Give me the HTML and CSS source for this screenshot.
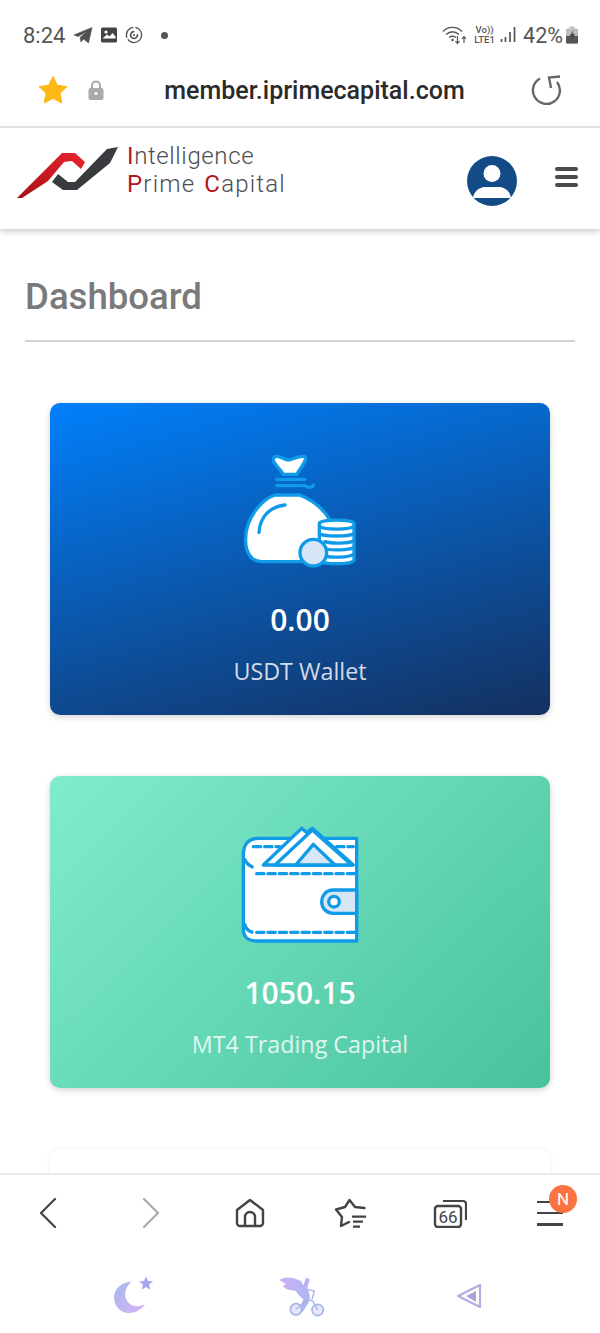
FILE: index.html
```html
<!DOCTYPE html>
<html lang="en">
<head>
<meta charset="utf-8">
<title>Dashboard</title>
<link rel="stylesheet" href="styles.css">
</head>
<body>
<div class="phone">
  <div class="status">
    <div class="status-left">
      <span class="time">8:24</span>
      <svg class="st-ic" width="20" height="18" viewBox="0 0 20 18"><path d="M1 9 19 1.500 15.500 17 10.500 13 8 16 7 11.500 14 5.500 5 10.500Z" fill="#4f4f4f" stroke="#4f4f4f" stroke-width=".6" stroke-linejoin="round"/></svg>
      <svg class="st-ic" width="18" height="18" viewBox="0 0 18 18"><rect x="1" y="1.500" width="16" height="15" rx="1.500" fill="#444"/><circle cx="6" cy="6" r="1.600" fill="#fff"/><path d="M2.500 12.500 7 8.500l2.500 2 3-3.500 3 3.500v2Z" fill="#fff"/></svg>
      <svg class="st-ic" width="18" height="18" viewBox="0 0 18 18"><circle cx="9" cy="9" r="7.600" fill="none" stroke="#555" stroke-width="1.400" stroke-dasharray="19 2 14 2"/><circle cx="9" cy="9" r="3.400" fill="none" stroke="#555" stroke-width="1.700" stroke-dasharray="16 4"/><circle cx="9" cy="9" r="1" fill="#555"/></svg>
      <span class="dot"></span>
    </div>
    <div class="status-right">
      <svg class="wifi" width="26" height="20" viewBox="0 0 26 20"><g fill="none" stroke="#555" stroke-width="1.400"><path d="M1 6.500C6 1 15 1 20 6.500"/><path d="M4 9.500C8 6 13 6 17 9.500"/><path d="M7 12.500C9 11 12 11 14 12.500"/></g><circle cx="10.500" cy="15" r="1.300" fill="#555"/><path d="M15.500 11v7M13.500 16l2 2.500 2-2.500M22 18v-6M20 14l2-2.500 2 2.500" stroke="#555" stroke-width="1.200" fill="none"/></svg>
      <span class="volte"><span>Vo))</span><span>LTE1</span></span>
      <svg class="signal" width="16" height="18" viewBox="0 0 16 18"><path d="M1.500 13v3M5.500 11v5M10 6v10M14.500 1v15" stroke="#555" stroke-width="1.700"/></svg>
      <span class="pct">42%</span>
      <svg class="batt" width="12" height="18" viewBox="0 0 12 18"><rect x="0" y="2.500" width="12" height="15" rx="1.500" fill="#bbb"/><rect x="3.500" y="0.500" width="5" height="2" fill="#bbb"/><rect x="0" y="10" width="12" height="7.500" rx="1" fill="#555"/><path d="M7.500 4 3.500 10.500H6l-1 4 4-6.500H6.500Z" fill="#444"/></svg>
    </div>
  </div>

  <div class="urlbar">
    <svg class="star" width="32" height="30" viewBox="0 0 32 30"><path d="M16 1.500 20.300 10.300 30 11.600 23 18.300 24.800 28 16 23.300 7.200 28 9 18.300 2 11.600 11.700 10.300Z" fill="#fdb813" stroke="#fdb813" stroke-linejoin="round"/></svg>
    <svg class="lock" width="18" height="22" viewBox="0 0 18 22"><path d="M5 10V6.500a4 4 0 0 1 8 0V10" fill="none" stroke="#aaa" stroke-width="2"/><rect x="1.500" y="9" width="15" height="12" rx="2" fill="#aaa"/><circle cx="9" cy="14.500" r="1.500" fill="#fff"/></svg>
    <span class="url">member.iprimecapital.com</span>
    <svg class="reload" width="32" height="32" viewBox="0 0 32 32"><path d="M10 4.500A13.500 13.500 0 1 0 27 8" fill="none" stroke="#666" stroke-width="2.400"/><path d="M30 2.500 19 3.500 21 14" fill="none" stroke="#666" stroke-width="2.400"/></svg>
  </div>

  <header class="site-head">
    <div class="logo">
      <svg class="logo-mark" width="104" height="54" viewBox="0 0 104 54">
        <defs><linearGradient id="lr" x1="0" y1="1" x2="1" y2="0"><stop offset="0" stop-color="#a80f18"/><stop offset="1" stop-color="#e8242c"/></linearGradient></defs>
        <path d="M1 53 46 8 59 8 69 17 65 24 56 16 48 17 32 36 6 53Z" fill="url(#lr)"/>
        <path d="M102 2 91 4 59 37 52 37 42 29 36 37 47 45 61 45 94 18Z" fill="#3a3b3e"/>
      </svg>
      <div class="logo-text">
        <span class="logo-line"><b class="r">I</b>ntelligence</span>
        <span class="logo-line logo-line-wide"><b class="r">P</b>rime <b class="r">C</b>apital</span>
      </div>
    </div>
    <div class="head-right">
      <svg class="avatar" width="50" height="50" viewBox="0 0 50 50"><defs><clipPath id="av"><circle cx="25" cy="25" r="25"/></clipPath></defs><circle cx="25" cy="25" r="25" fill="#134b86"/><circle cx="25" cy="17.500" r="8.500" fill="#fff"/><path d="M6 42c1-7 6-10 11-11h16c5 1 10 4 11 11Z" fill="#fff" clip-path="url(#av)"/></svg>
      <div class="burger"><i></i><i></i><i></i></div>
    </div>
  </header>

  <main class="content">
    <h1 class="title">Dashboard</h1>
    <section class="card card-blue">
      <svg class="card-ic" width="150" height="130" viewBox="0 0 450 390">
        <g stroke="#0f9be8" stroke-width="10" stroke-linejoin="round" stroke-linecap="round">
          <path d="M150 35C165 30 175 45 190 45S220 30 240 35C248 45 225 70 215 88H175C165 70 132 45 150 35Z" fill="#fff"/>
          <path d="M155 103H240M155 122H240C248 130 262 128 266 120" fill="none"/>
          <path d="M150 150H225C260 165 295 190 315 225L300 350H110C75 350 60 315 62 280 62 225 105 165 150 150Z" fill="#fff"/>
          <path d="M180 180C135 185 105 215 102 262" fill="none"/>
          <path d="M283 235C283 222 387 222 387 235V345C387 360 283 360 283 345Z" fill="#fff"/>
          <path d="M285 245C300 255 370 255 385 245M285 267C300 275 370 275 385 267M300 290C320 296 370 296 385 288M305 312C320 316 370 316 385 308M305 334C320 338 370 338 385 328" fill="none"/>
          <circle cx="265" cy="323" r="40" fill="#d6e6f7"/>
        </g>
      </svg>
      <div class="amount">0.00</div>
      <div class="label">USDT Wallet</div>
    </section>
    <section class="card card-green">
      <svg class="card-ic" width="150" height="130" viewBox="0 9 450 390">
        <g stroke="#0f9be8" stroke-width="10" stroke-linejoin="round">
          <path d="M395 70H100C70 70 55 90 55 120V345C55 365 70 378 95 378H395Z" fill="#fff"/>
          <path d="M115 150 230 40 245 52 262 40 385 150Z" fill="#fff"/>
          <path d="M150 150 262 45 380 150Z" fill="#fff"/>
          <path d="M212 150 265 88 330 150Z" fill="#d6e6f7"/>
          <path d="M395 225H325C300 225 290 245 290 260 290 280 305 295 325 295H395Z" fill="#d6e6f7"/>
          <circle cx="327" cy="260" r="16" fill="#fff"/>
          <path d="M58 130C62 145 72 150 85 158M58 325C62 342 72 350 85 352" fill="none"/>
          <g fill="none" stroke-dasharray="22 12" stroke-linecap="round">
            <path d="M85 95H165M335 95H385"/>
            <path d="M95 176H390"/>
            <path d="M95 352H390"/>
          </g>
        </g>
      </svg>
      <div class="amount">1050.15</div>
      <div class="label">MT4 Trading Capital</div>
    </section>
    <section class="card card-white"></section>
  </main>

  <nav class="bottom">
    <div class="tools">
      <svg class="tool" width="20" height="32" viewBox="0 0 20 32"><path d="M15 2 1 16 15 30" fill="none" stroke="#444" stroke-width="2.200" stroke-linecap="round" stroke-linejoin="round"/></svg>
      <svg class="tool" width="20" height="32" viewBox="0 0 20 32"><path d="M4 2 18 16 4 30" fill="none" stroke="#aaa" stroke-width="2.200" stroke-linecap="round" stroke-linejoin="round"/></svg>
      <svg class="tool" width="30" height="30" viewBox="0 0 30 30"><path d="M2 12 15 2 28 12V25a3 3 0 0 1-3 3H5a3 3 0 0 1-3-3Z" fill="none" stroke="#444" stroke-width="2.400" stroke-linejoin="round"/><path d="M10 28V19a5 5 0 0 1 10 0V28" fill="none" stroke="#444" stroke-width="2.400"/></svg>
      <svg class="tool" width="32" height="30" viewBox="0 0 32 30"><path d="M30.500 10 21 9 15.500 2 11 9 2 11.500 8 19 7 28 15 24" fill="none" stroke="#444" stroke-width="2.400" stroke-linejoin="round" stroke-linecap="round"/><path d="M18 18.700H32M19 23.700H29M19 28.700H26" stroke="#444" stroke-width="2.200"/></svg>
      <div class="tool tabs">
        <svg width="34" height="30" viewBox="0 0 34 30"><path d="M10 3H30a3 3 0 0 1 3 3V22" fill="none" stroke="#444" stroke-width="2.200"/><rect x="2" y="8" width="26" height="21" rx="3" fill="none" stroke="#444" stroke-width="2.400"/></svg>
        <span class="tabs-num">66</span>
      </div>
      <div class="tool menu">
        <i></i><i></i><i></i>
        <span class="badge">N</span>
      </div>
    </div>
    <div class="extras">
      <svg width="44" height="42" viewBox="0 0 132 126"><defs><linearGradient id="mn" x1="0" y1="0" x2="1" y2="1"><stop offset="0" stop-color="#a9b8ee"/><stop offset="1" stop-color="#d4b4f2"/></linearGradient></defs><path d="M62 20C30 22 9 42 9 67 9 95 30 114 52 114 75 114 92 104 102 87 82 98 62 95 50 80 36 62 42 35 62 20Z" fill="url(#mn)"/><path d="M105 4 111 18 126 19 114 29 118 44 105 36 92 44 96 29 84 19 99 18Z" fill="#a7a6ec"/></svg>
      <svg width="70" height="60" viewBox="0 0 210 180"><defs><linearGradient id="bk" x1="0" y1="0" x2="1" y2="1"><stop offset="0" stop-color="#cdb0f5"/><stop offset="1" stop-color="#a5b8f0"/></linearGradient></defs><path d="M40 42C60 28 85 35 105 45L112 58 120 35 130 38C132 50 122 60 125 70 132 85 135 100 125 115L110 138 100 128 112 100C105 95 95 85 90 75L62 70 50 60 60 55Z" fill="url(#bk)"/><g fill="#e4e8fa" stroke="#a6b4e6" stroke-width="5"><circle cx="90" cy="130" r="17"/><circle cx="155" cy="132" r="17"/></g><path d="M90 130 125 100 140 105 155 132M125 70 145 75 138 100" fill="none" stroke="#a6b4e6" stroke-width="4"/></svg>
      <svg width="26" height="26" viewBox="0 0 26 26"><path d="M24 2V24L2 13Z" fill="none" stroke="#bba9e4" stroke-width="2.200" stroke-linejoin="round"/><path d="M20 8V19L10 13Z" fill="#a9a4dc"/></svg>
    </div>
  </nav>
</div>
</body>
</html>
```
FILE: styles.css
```css
* { box-sizing: border-box; }
html, body { margin: 0; padding: 0; }
body { background: #fff; font-family: Roboto, "Liberation Sans", sans-serif; }
.phone { width: 600px; height: 1333px; display: flex; flex-direction: column; overflow: hidden; background: #fff; }

.status { height: 60px; flex: none; display: flex; justify-content: space-between; align-items: center; padding: 10px 22px 0 23px; color: #555; }
.status-left, .status-right { display: flex; align-items: center; }
.time { font-size: 22px; margin-right: 8px; color: #555; }
.st-ic { margin-right: 7px; }
.dot { width: 7px; height: 7px; border-radius: 50%; background: #555; margin-left: 11px; }
.wifi { margin-right: 6px; }
.volte { display: flex; flex-direction: column; font-size: 9.500px; line-height: 10px; align-items: center; font-weight: 500; width: 21px; margin-right: 5px; }
.signal { margin-right: 7px; }
.pct { font-size: 21.500px; margin-right: 3px; }

.urlbar { height: 68px; flex: none; display: flex; align-items: center; padding: 0 38px 6px 37px; border-bottom: 2px solid #e6e6e6; }
.star { flex: none; }
.lock { flex: none; margin-left: 18px; }
.url { flex: 1; text-align: center; font-size: 25px; font-weight: 500; color: #2b2b2b; padding-right: 6px; white-space: nowrap; }
.reload { flex: none; }

.site-head { height: 101px; flex: none; display: flex; justify-content: space-between; align-items: center; padding: 0 22px 0 16px; box-shadow: 0 3px 6px rgba(0,0,0,.18); position: relative; background: #fff; }
.logo { display: flex; align-items: center; gap: 7px; }
.logo-mark { margin-bottom: 14px; }
.logo-text { display: flex; flex-direction: column; padding-bottom: 18px; }
.logo-line { display: block; font-family: Roboto, sans-serif; font-weight: 300; font-size: 24px; line-height: 28px; color: #4b4c50; letter-spacing: .62px; white-space: nowrap; }
.logo-line-wide { letter-spacing: 1.200px; word-spacing: 2px; }
.r { color: #b3161e; font-weight: 400; }
.head-right { display: flex; align-items: center; gap: 38px; }
.avatar { margin-top: 5px; }
.burger { display: flex; flex-direction: column; gap: 4px; margin-bottom: 4px; }
.burger i { display: block; width: 23px; height: 4px; border-radius: 2px; background: #4b4b4b; }

.content { flex: 1; min-height: 0; padding: 46px 25px 0; overflow: hidden; }
.title { margin: 0 0 61px; padding-bottom: 21px; border-bottom: 2px solid #d2d2d2; font-size: 36.600px; line-height: 44px; font-weight: 500; color: #7a7a7a; }
.card { margin: 0 25px 61px; height: 312px; border-radius: 10px; display: flex; flex-direction: column; align-items: center; box-shadow: 0 2px 6px rgba(0,0,0,.18); color: #fff; font-family: "Open Sans", sans-serif; padding-top: 42px; }
.card-blue { background: linear-gradient(165deg, #0180fb, #14305f); }
.card-green { background: linear-gradient(135deg, #80ecce, #49c29c); }
.card-white { background: #fff; box-shadow: 0 0 5px rgba(0,0,0,.08); }
.card-ic { display: block; flex: none; }
.amount { font-size: 30px; line-height: 40px; font-weight: 600; margin-top: 25px; }
.label { font-size: 23.300px; line-height: 30px; margin-top: 16px; color: rgba(255,255,255,.82); }

.bottom { flex: none; height: 160px; background: #fff; border-top: 2px solid #e8e8e8; position: relative; }
.tools { display: grid; grid-template-columns: repeat(6, 100px); align-items: center; justify-items: center; height: 76px; }
.tool { display: block; }
.tabs { position: relative; width: 34px; height: 30px; }
.tabs svg { display: block; }
.tabs-num { position: absolute; left: 2px; top: 9px; width: 26px; text-align: center; font-size: 17px; line-height: 20px; color: #444; }
.menu { position: relative; width: 26px; height: 25px; display: flex; flex-direction: column; justify-content: space-between; }
.menu i { display: block; height: 2.500px; background: #444; }
.badge { position: absolute; top: -16px; right: -14px; width: 28px; height: 28px; border-radius: 50%; background: #fb7340; color: #fff; font-size: 17px; line-height: 28px; text-align: center; }
.extras { display: grid; grid-template-columns: repeat(3, 168px); justify-items: center; align-items: center; padding: 8px 0 0 49px; height: 82px; }
```
